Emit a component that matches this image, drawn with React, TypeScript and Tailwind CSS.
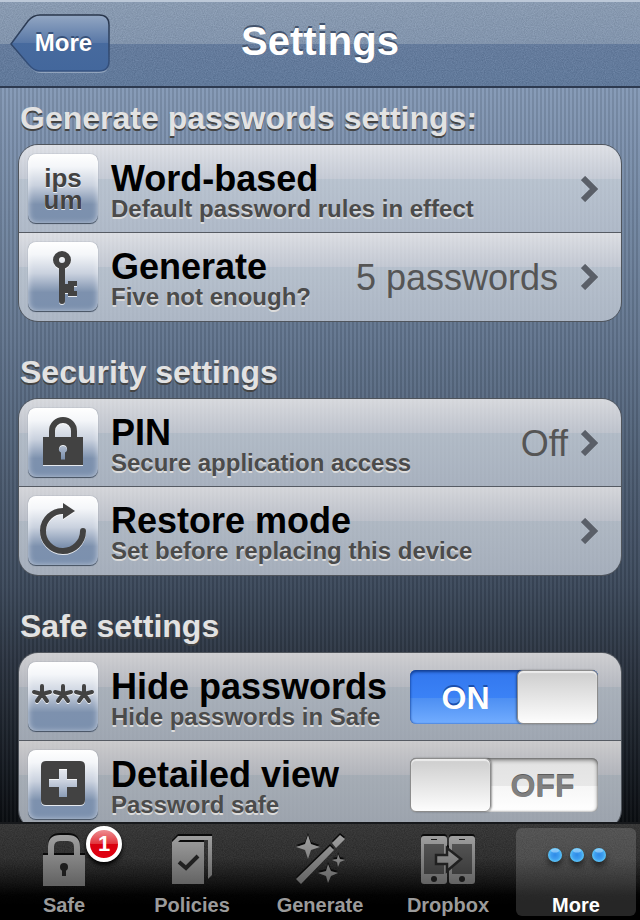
import React, { useState } from "react";
import type { ReactNode } from "react";

const FONT = "font-['Liberation_Sans',Arial,sans-serif]";

function Grain({ id, opacity }: { id: string; opacity: number }) {
  return (
    <svg className="pointer-events-none absolute inset-0 h-full w-full" aria-hidden="true" style={{ opacity }}>
      <filter id={id} x="0" y="0" width="100%" height="100%" colorInterpolationFilters="sRGB">
        <feTurbulence type="fractalNoise" baseFrequency="0.9" numOctaves="2" stitchTiles="stitch" />
        <feColorMatrix type="matrix" values="1 0 0 0 0  1 0 0 0 0  1 0 0 0 0  0 0 0 0 1" />
      </filter>
      <rect width="100%" height="100%" filter={`url(#${id})`} />
    </svg>
  );
}

function Header() {
  return (
    <header className="relative flex h-[88px] shrink-0 items-center justify-center border-t-2 border-b-2 border-t-[#bcc8d8] border-b-[#2d3a50] bg-[linear-gradient(#8b9fb9,#8398b4_50%,#617ba1_50%,#5d799f)]">
      <Grain id="headerGrain" opacity={0.13} />
      <button type="button" className="absolute top-3 left-2.5 h-[59px] w-[101px] pb-px pl-1.5 text-[24px] font-bold text-white [text-shadow:0_-2px_0_#38527a]">
        <svg className="absolute inset-0" width="101" height="59" viewBox="0 0 101 59" aria-hidden="true">
          <defs>
            <linearGradient id="back" x1="0" y1="0" x2="0" y2="1">
              <stop offset="0" stopColor="#93a7c3" />
              <stop offset="0.5" stopColor="#5877a6" />
              <stop offset="0.5" stopColor="#476a9e" />
              <stop offset="1" stopColor="#43679c" />
            </linearGradient>
            <linearGradient id="backEdge" x1="0" y1="0" x2="0" y2="1">
              <stop offset="0" stopColor="#29364b" />
              <stop offset="1" stopColor="#355280" />
            </linearGradient>
          </defs>
          <path d="M2 31 L19 8 Q24 2 31 2 H89 Q99 2 99 12 V49 Q99 59 89 59 H31 Q25 59 20 53 Z" fill="#a6b6cc" opacity=".7" />
          <path d="M1 30 L18 7 Q23 1 30 1 H89 Q99 1 99 11 V47 Q99 57 89 57 H30 Q24 57 19 51 Z" fill="url(#back)" stroke="url(#backEdge)" strokeWidth="1.5" />
        </svg>
        <span className="relative">More</span>
      </button>
      <h1 className="relative pb-1.5 text-[40px] leading-[44px] font-bold text-white [text-shadow:0_-2px_0_#43536c]">Settings</h1>
    </header>
  );
}

const INK = "#424242";
const GLYPH = "[filter:drop-shadow(0_1px_0_#ffffffcc)]";

function KeyIcon() {
  return (
    <svg className={GLYPH} width="70" height="70" viewBox="0 0 70 70" aria-hidden="true">
      <circle cx="34" cy="18" r="6" fill="none" stroke={INK} strokeWidth="6" />
      <path d="M31 24h6v18h3v-3h9v5h-3v5h3v5h-9v-3h-3v8q0 3 -3 3t-3 -3z" fill={INK} />
    </svg>
  );
}

function PinIcon() {
  return (
    <svg className={GLYPH} width="70" height="70" viewBox="0 0 70 70" aria-hidden="true">
      <path d="M24 30V23a11 11 0 0 1 22 0v7" fill="none" stroke={INK} strokeWidth="6" />
      <path fillRule="evenodd" fill={INK} d="M15 29h40v28H15zM35 37a4 4 0 0 0-2 7.500v7h4v-7a4 4 0 0 0-2-7.500z" />
    </svg>
  );
}

function RestoreIcon() {
  return (
    <svg className={GLYPH} width="70" height="70" viewBox="0 0 70 70" aria-hidden="true">
      <path d="M36 15A20 20 0 1 0 55 35" fill="none" stroke={INK} strokeWidth="6" strokeLinecap="round" />
      <path d="M35 7v16l12-8z" fill={INK} />
    </svg>
  );
}

function StarsIcon() {
  return (
    <svg className={GLYPH} width="70" height="70" viewBox="0 0 70 70" aria-hidden="true">
      <g stroke={INK} strokeWidth="4" strokeLinecap="round">
        {[14, 35, 56].map((x) => (
          <path key={x} d={`M${x} 32V24M${x} 32l-8-2M${x} 32l8-2M${x} 32l-5 7M${x} 32l5 7`} />
        ))}
      </g>
    </svg>
  );
}

function PlusIcon() {
  return (
    <svg className={GLYPH} width="70" height="70" viewBox="0 0 70 70" aria-hidden="true">
      <path
        fillRule="evenodd"
        fill={INK}
        d="M18 11h34q5 0 5 5v34q0 5-5 5H18q-5 0-5-5V16q0-5 5-5zM31 19v10H21v8h10v10h8V37h10v-8H39V19z"
      />
    </svg>
  );
}

function IpsumIcon() {
  return (
    <span className="text-center text-[26px] leading-[22px] font-bold text-[#424242] [text-shadow:0_1px_0_#ffffffcc]">
      ips
      <br />
      um
    </span>
  );
}

function Tile({ children }: { children: ReactNode }) {
  return (
    <span className="flex size-[70px] shrink-0 items-center justify-center rounded-lg bg-[linear-gradient(#ffffff,#f4f6f9_18%,#c9d1de_45%,#7d91ae_72%,#7b90ae)] shadow-[inset_0_-1px_0_#4c5868,inset_0_0_6px_#ffffffa0,0_0_1px_#5c687a]">
      {children}
    </span>
  );
}

function Labels({ title, note }: { title: string; note: string }) {
  return (
    <span className="flex grow flex-col pt-0.5 whitespace-nowrap">
      <span className="text-[36px] leading-[38px] font-bold text-black">{title}</span>
      <span className="text-[24px] leading-[22px] font-bold text-[#4b4b4b] [text-shadow:0_2px_0_#dcdcdc]">{note}</span>
    </span>
  );
}

const ROW =
  "flex h-[88px] items-center gap-[13px] pr-[23px] pl-[9px] bg-[linear-gradient(#f7f5f5cc,#d8dae1cc_34px,#c9d1dacc_34px,#bfc7d3cc)]";

function LinkRow(props: { icon: ReactNode; title: string; note: string; value?: string; valueGap?: string }) {
  return (
    <a href="#" className={ROW}>
      <Tile>{props.icon}</Tile>
      <Labels title={props.title} note={props.note} />
      {props.value && (
        <span className={`pt-0.5 text-[36px] leading-[36px] whitespace-nowrap text-[#555555] ${props.valueGap ?? ""}`}>{props.value}</span>
      )}
      <svg className="shrink-0" width="17" height="26" viewBox="0 0 17 26" aria-hidden="true">
        <path d="M2 2l11 11L2 24" fill="none" stroke="#5a5f68" strokeWidth="6" />
      </svg>
    </a>
  );
}

function SwitchRow(props: { icon: ReactNode; title: string; note: string; initial: boolean }) {
  const [on, setOn] = useState(props.initial);
  return (
    <label className={`relative ${ROW}`}>
      <Tile>{props.icon}</Tile>
      <Labels title={props.title} note={props.note} />
      <input type="checkbox" role="switch" checked={on} onChange={() => setOn(!on)} className="sr-only" />
      {on ? (
        <span className="flex h-[54px] w-[188px] shrink-0 rounded-md bg-[linear-gradient(#3277ee,#3b82f6_52%,#4d8ff2_52%,#72adff)] shadow-[inset_0_2px_3px_#123e92,inset_0_0_2px_#1c4ca8]">
          <span className="grow pl-1 text-center text-[32px] leading-[56px] font-bold text-white [text-shadow:0_-2px_0_#1b4fae]">ON</span>
          <span className="w-[81px] rounded-md border border-[#8c8c8c] bg-[linear-gradient(#cdcdcd,#fdfdfd)] shadow-[inset_0_2px_1px_#ffffffa0,-1px_0_2px_#00000060]" />
        </span>
      ) : (
        <span className="flex h-[54px] w-[188px] shrink-0 rounded-md bg-[linear-gradient(#e2e2e2,#e8e8e8_52%,#f6f6f6_52%,#ffffff)] shadow-[inset_0_2px_4px_#00000080,inset_0_0_2px_#00000080]">
          <span className="w-[81px] rounded-md border border-[#8c8c8c] bg-[linear-gradient(#cdcdcd,#fdfdfd)] shadow-[inset_0_2px_1px_#ffffffa0,1px_0_2px_#00000060]" />
          <span className="grow pr-1 text-center text-[32px] leading-[56px] font-bold text-[#808080] [text-shadow:0_-1px_0_#5c5c5c]">OFF</span>
        </span>
      )}
    </label>
  );
}

function Section({ title, children }: { title: string; children: ReactNode }) {
  return (
    <section>
      <h2 className="mb-2.5 pl-0.5 text-[32px] leading-[32px] font-bold whitespace-nowrap text-[#e2e2e2] [text-shadow:0_2px_0_#444444]">{title}</h2>
      <div className="divide-y divide-[#565b63] overflow-hidden rounded-[20px] border border-[#50555c]">{children}</div>
    </section>
  );
}

function TabDefs() {
  return (
    <svg width="0" height="0" className="absolute" aria-hidden="true">
      <linearGradient id="tab" gradientUnits="userSpaceOnUse" x1="0" y1="0" x2="0" y2="56">
        <stop offset="0" stopColor="#a9a9a9" />
        <stop offset="1" stopColor="#636363" />
      </linearGradient>
      <linearGradient id="screen" gradientUnits="userSpaceOnUse" x1="0" y1="0" x2="0" y2="56">
        <stop offset="0" stopColor="#606060" />
        <stop offset="1" stopColor="#343434" />
      </linearGradient>
      <radialGradient id="dot" cx=".5" cy=".5" r=".5">
        <stop offset="0" stopColor="#2f8ae6" />
        <stop offset=".6" stopColor="#3f9ff0" />
        <stop offset="1" stopColor="#5cc6f8" />
      </radialGradient>
    </svg>
  );
}

const TAB_ICON = "[filter:drop-shadow(0_-2px_0_#0a0a0a)]";

function SafeTab() {
  return (
    <svg className={TAB_ICON} width="56" height="56" viewBox="0 0 56 56" aria-hidden="true">
      <path fill="url(#tab)" fillRule="evenodd" d="M7 27H12V19Q12 7 24 7H32Q44 7 44 19V27H49V58H7zM18 27H38V19Q38 13 32 13H24Q18 13 18 19z" />
      <circle cx="28" cy="39" r="4" fill="#1d1d1d" />
      <path d="M26 39h4v9h-4z" fill="#1d1d1d" />
    </svg>
  );
}

function PoliciesTab() {
  return (
    <svg className={TAB_ICON} width="56" height="56" viewBox="0 0 56 56" aria-hidden="true">
      <path fill="url(#tab)" d="M8 14L14 8H48V47L44 51V12H16L14 14H40V56H8z" />
      <path d="M15 34l7 6 12-12" fill="none" stroke="#202020" strokeWidth="4" />
    </svg>
  );
}

function GenerateTab() {
  return (
    <svg className={TAB_ICON} width="56" height="56" viewBox="0 0 56 56" aria-hidden="true">
      <g fill="url(#tab)">
        <path d="M16 7l3 9 9 3-9 3-3 9-3-9-9-3 9-3z" />
        <path d="M36 36l3 7 7 2-7 3-3 7-2-7-8-3 8-2z" />
        <path d="M46 26l2 5 5 1-5 2-2 5-1-5-5-2 5-1z" />
        <path d="M4 51L38 18l4 4L9 56zM40 15l8-8 5 4-9 9z" />
      </g>
    </svg>
  );
}

function DropboxTab() {
  return (
    <svg className={TAB_ICON} width="56" height="56" viewBox="0 0 56 56" aria-hidden="true">
      <g fill="url(#tab)">
        <rect x="1" y="8" width="26" height="48" rx="3" />
        <rect x="29" y="8" width="26" height="48" rx="3" />
      </g>
      <g fill="url(#screen)">
        <path d="M4 16h20v30H4z" />
        <path d="M32 16h20v30H32z" />
      </g>
      <g fill="#1a1a1a">
        <circle cx="14" cy="51" r="3" />
        <circle cx="42" cy="51" r="3" />
        <path d="M11 11h6v1h-6zM39 11h6v1h-6z" />
      </g>
      <path d="M16 27h11v-7l14 11-14 12v-7H16z" fill="url(#tab)" stroke="#202020" strokeWidth="2.500" />
    </svg>
  );
}

function MoreTab() {
  return (
    <svg className="[filter:drop-shadow(0_4px_3px_#00000090)]" width="60" height="56" viewBox="0 0 60 56" aria-hidden="true">
      {[9, 31, 53].map((x) => (
        <g key={x}>
          <circle cx={x} cy="27" r="7" fill="url(#dot)" />
          <ellipse cx={x} cy="22.500" rx="4" ry="2" fill="#c4e6ff" opacity=".5" />
        </g>
      ))}
    </svg>
  );
}

function Tab({ icon, label, active, badge }: { icon: ReactNode; label: string; active?: boolean; badge?: number }) {
  return (
    <a
      href="#"
      aria-current={active ? "page" : undefined}
      className={`relative my-1 flex h-[88px] w-[120px] flex-col items-center rounded-md ${active ? "bg-white/15 text-white" : "text-[#9b9b9b]"}`}
    >
      <span className="flex h-14 overflow-visible [&>svg]:overflow-visible">{icon}</span>
      {badge && (
        <span className="absolute top-[-2px] left-[82px] flex size-9 items-center justify-center rounded-full border-4 border-white bg-[linear-gradient(#ee8e92,#e2323a_50%,#d9000e_50%,#e00012)] text-[22px] leading-[22px] font-bold text-white shadow-[0_3px_4px_#000000]">
          {badge}
        </span>
      )}
      <span className="mt-[11px] text-[20px] leading-[20px] font-bold">{label}</span>
    </a>
  );
}

function TabBar() {
  return (
    <nav className="relative h-[98px] shrink-0 border-t-2 border-[#17191c] bg-[linear-gradient(#303030,#282828_35%,#000000_75%)]">
      <div className="absolute inset-0 [mask-image:linear-gradient(#000,#000_35%,#0000_85%)]">
        <Grain id="tabGrain" opacity={0.1} />
      </div>
      <TabDefs />
      <div className="relative flex justify-between pr-1 pl-1">
        <Tab icon={<SafeTab />} label="Safe" badge={1} />
        <Tab icon={<PoliciesTab />} label="Policies" />
        <Tab icon={<GenerateTab />} label="Generate" />
        <Tab icon={<DropboxTab />} label="Dropbox" />
        <Tab icon={<MoreTab />} label="More" active />
      </div>
    </nav>
  );
}

export default function App() {
  return (
    <div className={`flex h-screen flex-col overflow-hidden ${FONT}`}>
      <Header />
      <main className="min-h-0 grow overflow-hidden bg-[repeating-linear-gradient(90deg,#00000018_0_2px,#ffffff08_2px_4px),linear-gradient(#8499b6,#61748d_35%,#3c495b_68%,#2c3542_78%,#0a0d11)]">
        <div className="flex flex-col gap-[34px] px-[18px] pt-3.5">
          <Section title="Generate passwords settings:">
            <LinkRow icon={<IpsumIcon />} title="Word-based" note="Default password rules in effect" />
            <LinkRow icon={<KeyIcon />} title="Generate" note="Five not enough?" value="5 passwords" valueGap="mr-2.5" />
          </Section>
          <Section title="Security settings">
            <LinkRow icon={<PinIcon />} title="PIN" note="Secure application access" value="Off" />
            <LinkRow icon={<RestoreIcon />} title="Restore mode" note="Set before replacing this device" />
          </Section>
          <Section title="Safe settings">
            <SwitchRow icon={<StarsIcon />} title="Hide passwords" note="Hide passwords in Safe" initial={true} />
            <SwitchRow icon={<PlusIcon />} title="Detailed view" note="Password safe" initial={false} />
          </Section>
        </div>
      </main>
      <TabBar />
    </div>
  );
}
